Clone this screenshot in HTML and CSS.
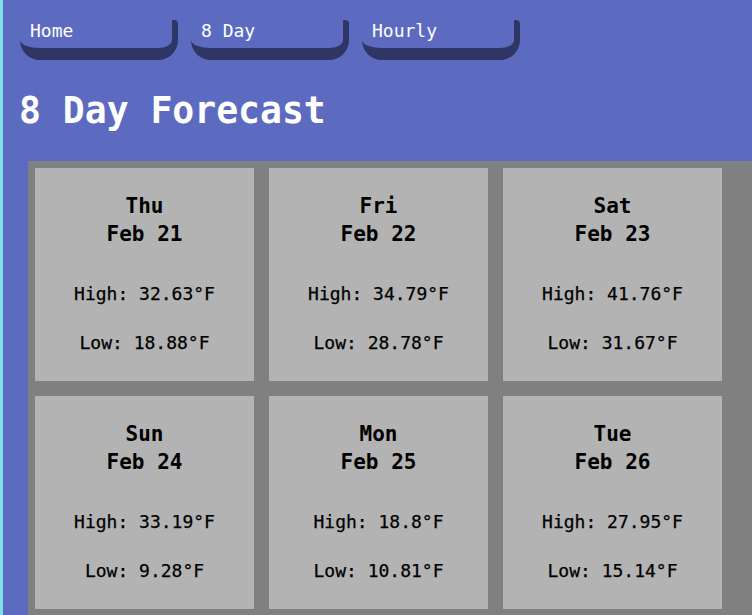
FILE: index.html
```html
<!DOCTYPE html>
<html lang="en">
<head>
<meta charset="utf-8">
<title>8 Day Forecast</title>
<link rel="stylesheet" href="styles.css">
</head>
<body>
<nav class="nav">
  <a class="nav-btn" href="#">Home</a>
  <a class="nav-btn" href="#">8 Day</a>
  <a class="nav-btn" href="#">Hourly</a>
</nav>
<h1 class="title">8 Day Forecast</h1>
<div class="grid">
  <div class="card">
    <div class="card-head">Thu<br>Feb 21</div>
    <p class="high">High: 32.63°F</p>
    <p class="low">Low: 18.88°F</p>
  </div>
  <div class="card">
    <div class="card-head">Fri<br>Feb 22</div>
    <p class="high">High: 34.79°F</p>
    <p class="low">Low: 28.78°F</p>
  </div>
  <div class="card">
    <div class="card-head">Sat<br>Feb 23</div>
    <p class="high">High: 41.76°F</p>
    <p class="low">Low: 31.67°F</p>
  </div>
  <div class="card">
    <div class="card-head">Sun<br>Feb 24</div>
    <p class="high">High: 33.19°F</p>
    <p class="low">Low: 9.28°F</p>
  </div>
  <div class="card">
    <div class="card-head">Mon<br>Feb 25</div>
    <p class="high">High: 18.8°F</p>
    <p class="low">Low: 10.81°F</p>
  </div>
  <div class="card">
    <div class="card-head">Tue<br>Feb 26</div>
    <p class="high">High: 27.95°F</p>
    <p class="low">Low: 15.14°F</p>
  </div>
</div>
</body>
</html>
```

FILE: styles.css
```css
html {
  overflow: hidden;
  background: #5c6bc0;
}
body {
  margin: 0;
  min-height: 100vh;
  border-left: 3px solid #80deea;
  background: #5c6bc0;
  font-family: "DejaVu Sans Mono", monospace;
  color: #000;
}
.nav {
  display: flex;
  gap: 13px;
  padding: 20px 0 0 17px;
}
.nav-btn {
  display: block;
  box-sizing: border-box;
  width: 158px;
  height: 40px;
  padding: 1px 0 0 10px;
  line-height: 20px;
  font-size: 18px;
  color: #fff;
  text-decoration: none;
  background: #5c6bc0;
  border-right: 6px solid #2f3564;
  border-bottom: 12px solid #2f3564;
  border-radius: 0 4px 20px 20px;
}
.title {
  margin: 30px 0 29px 16px;
  font-size: 36.4px;
  line-height: 42px;
  font-weight: bold;
  color: #fff;
}
.grid {
  display: grid;
  grid-template-columns: repeat(3, 219px);
  gap: 15px;
  margin-left: 25px;
  padding: 7px;
  background: #808080;
}
.card {
  box-sizing: border-box;
  height: 213px;
  padding-top: 24px;
  background: #b3b3b3;
  text-align: center;
}
.card-head {
  font-size: 21px;
  line-height: 28px;
  font-weight: bold;
}
.high,
.low {
  margin: 0;
  font-size: 18px;
  line-height: 24px;
  -webkit-text-stroke: 0.25px #000;
}
.high {
  margin-top: 34px;
}
.low {
  margin-top: 25px;
}
```
